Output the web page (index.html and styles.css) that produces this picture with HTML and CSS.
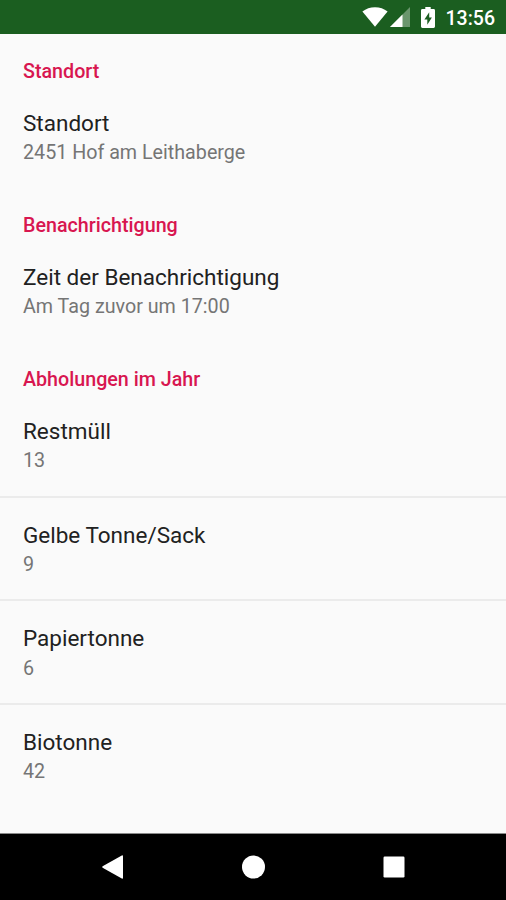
FILE: index.html
```html
<!DOCTYPE html>
<html lang="de">
<head>
    <meta charset="UTF-8">
    <meta name="viewport" content="width=device-width, initial-scale=1.0">
    <title>Einstellungen</title>
    <link rel="stylesheet" href="styles.css">
</head>
<body>
    <header class="status-bar">
        <svg class="icon-wifi" width="26" height="20" viewBox="0 0 26 20">
            <path d="M0.4 4.6C4 1.6 8.2 0.2 13 0.2s9 1.4 12.6 4.4L13 19.8z" fill="#fff"/>
        </svg>
        <svg class="icon-signal" width="20" height="20" viewBox="0 0 20 20">
            <path d="M20 0v20H0z" fill="#fff" fill-opacity="0.35"/>
            <path d="M12.5 7.5V20H0z" fill="#fff"/>
        </svg>
        <svg class="icon-battery" width="14" height="21" viewBox="0 0 14 21">
            <path d="M4.3 0h5.4v2h2.9q1.4 0 1.4 1.4v16.2q0 1.4-1.4 1.4H1.4Q0 21 0 19.6V3.4Q0 2 1.4 2h2.9z" fill="#fff"/>
            <path d="M8.2 5.2L3.4 12.6h2.9v5.2l4.6-7.4H8.2z" fill="#1b5e20"/>
        </svg>
        <span class="clock">13:56</span>
    </header>

    <main class="settings">
        <section>
            <h2 class="category">Standort</h2>
            <div class="item">
                <div class="item-title">Standort</div>
                <div class="item-summary">2451 Hof am Leithaberge</div>
            </div>
        </section>

        <section>
            <h2 class="category">Benachrichtigung</h2>
            <div class="item">
                <div class="item-title">Zeit der Benachrichtigung</div>
                <div class="item-summary">Am Tag zuvor um 17:00</div>
            </div>
        </section>

        <section>
            <h2 class="category">Abholungen im Jahr</h2>
            <div class="item">
                <div class="item-title">Restmüll</div>
                <div class="item-summary">13</div>
            </div>
            <div class="item">
                <div class="item-title">Gelbe Tonne/Sack</div>
                <div class="item-summary">9</div>
            </div>
            <div class="item">
                <div class="item-title">Papiertonne</div>
                <div class="item-summary">6</div>
            </div>
            <div class="item">
                <div class="item-title">Biotonne</div>
                <div class="item-summary">42</div>
            </div>
        </section>
    </main>

    <nav class="nav-bar">
        <svg width="24" height="24" viewBox="0 0 24 24">
            <path d="M22 1.2v21.6q0 1.2-1.2.8L1.6 12.8q-1-.8 0-1.6L20.8.4q1.2-.4 1.2.8z" fill="#fff"/>
        </svg>
        <svg width="24" height="24" viewBox="0 0 24 24">
            <circle cx="11.5" cy="12" r="11.5" fill="#fff"/>
        </svg>
        <svg width="24" height="24" viewBox="0 0 24 24">
            <rect x="1.5" y="1.5" width="21" height="21" rx="1.2" fill="#fff"/>
        </svg>
    </nav>
</body>
</html>
```

FILE: styles.css
```css
* {
    margin: 0;
    padding: 0;
    box-sizing: border-box;
}

body {
    font-family: Roboto, sans-serif;
    background: #fafafa;
    height: 100vh;
    display: flex;
    flex-direction: column;
    overflow: hidden;
}

.status-bar {
    height: 34px;
    flex-shrink: 0;
    display: flex;
    align-items: center;
    justify-content: flex-end;
    padding-right: 11px;
    background: #1b5e20;
    color: #fff;
}

.icon-wifi {
    margin-right: 2px;
}

.icon-signal {
    margin-right: 11px;
}

.icon-battery {
    margin-right: 11px;
}

.clock {
    font-size: 19.5px;
    font-weight: 500;
    line-height: 34px;
    padding-top: 3px;
}

.settings {
    flex: 1;
    min-height: 0;
}

.category {
    height: 51.6px;
    padding-top: 24.6px;
    padding-left: 23px;
    font-size: 19.7px;
    font-weight: 500;
    line-height: 26px;
    color: #d81650;
}

.item {
    padding: 22.2px 23px 19.6px;
}

.item + .item {
    border-top: 2px solid #ebebeb;
    padding-top: 22.4px;
}

.item-title {
    font-size: 22.5px;
    line-height: 30px;
    color: #212121;
}

.item-summary {
    font-size: 19.7px;
    line-height: 28.5px;
    padding-top: 1.1px;
    color: #757575;
}

section + section {
    padding-top: 1.3px;
}

.nav-bar {
    height: 67px;
    flex-shrink: 0;
    display: flex;
    align-items: center;
    justify-content: center;
    gap: 116.5px;
    padding-left: 1px;
    border-top: 1px solid #8a8a8a;
    background: #000;
}
```
